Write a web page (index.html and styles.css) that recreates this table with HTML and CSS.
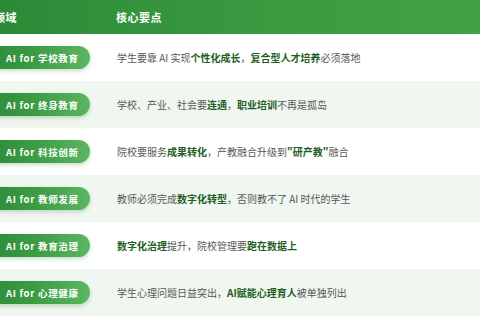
FILE: index.html
```html
<!DOCTYPE html>
<html lang="zh">
<head>
<meta charset="utf-8">
<link rel="stylesheet" href="styles.css">
</head>
<body>
<div class="table">
  <div class="head">
    <div class="hc hc-domain">领域</div>
    <div class="hc hc-point">核心要点</div>
  </div>
  <div class="row">
    <div class="c-domain"><span class="pill">AI for 学校教育</span></div>
    <div class="c-point">学生要靠 AI 实现<b>个性化成长</b>，<b>复合型人才培养</b>必须落地</div>
  </div>
  <div class="row alt">
    <div class="c-domain"><span class="pill">AI for 终身教育</span></div>
    <div class="c-point">学校、产业、社会要<b>连通</b>，<b>职业培训</b>不再是孤岛</div>
  </div>
  <div class="row">
    <div class="c-domain"><span class="pill">AI for 科技创新</span></div>
    <div class="c-point">院校要服务<b>成果转化</b>，产教融合升级到<b>"研产教"</b>融合</div>
  </div>
  <div class="row alt">
    <div class="c-domain"><span class="pill">AI for 教师发展</span></div>
    <div class="c-point">教师必须完成<b>数字化转型</b>，否则教不了 AI 时代的学生</div>
  </div>
  <div class="row">
    <div class="c-domain"><span class="pill">AI for 教育治理</span></div>
    <div class="c-point"><b>数字化治理</b>提升，院校管理要<b>跑在数据上</b></div>
  </div>
  <div class="row alt">
    <div class="c-domain"><span class="pill">AI for 心理健康</span></div>
    <div class="c-point">学生心理问题日益突出，<b>AI赋能心理育人</b>被单独列出</div>
  </div>
</div>
</body>
</html>
```
FILE: styles.css
```css
html, body {
  margin: 0;
  padding: 0;
  width: 480px;
  height: 320px;
  overflow: hidden;
  background: #ffffff;
  font-family: "Noto Sans CJK SC", "Noto Sans", sans-serif;
}
.table {
  display: flex;
  flex-direction: column;
  width: 480px;
}
.head {
  display: flex;
  align-items: center;
  height: 34px;
  background: linear-gradient(90deg, #2c8a37 0%, #3a9a40 55%, #44a046 100%);
  color: #ffffff;
  font-weight: bold;
  font-size: 11px;
  letter-spacing: 0.5px;
}
.hc-domain {
  width: 122px;
  margin-left: -6px;
  flex: none;
}
.hc-point {
  flex: 1;
}
.row {
  display: flex;
  align-items: center;
  height: 47px;
  background: #ffffff;
}
.row.alt {
  background: #f0f7f1;
}
.c-domain {
  width: 117px;
  flex: none;
}
.pill {
  display: flex;
  align-items: center;
  box-sizing: border-box;
  width: 106px;
  height: 23px;
  margin-left: -16px;
  padding-left: 22px;
  border-radius: 12px;
  background: linear-gradient(90deg, #2b8a37 0%, #3d9d45 50%, #5cb662 100%);
  box-shadow: 0 2px 4px rgba(40, 120, 50, 0.25);
  color: #ffffff;
  font-weight: bold;
  font-size: 9.5px;
  letter-spacing: 0.7px;
  white-space: nowrap;
}
.c-point {
  flex: 1;
  font-size: 10px;
  color: #555a55;
  white-space: nowrap;
}
.c-point b {
  color: #1f5e24;
  font-weight: bold;
}
```
